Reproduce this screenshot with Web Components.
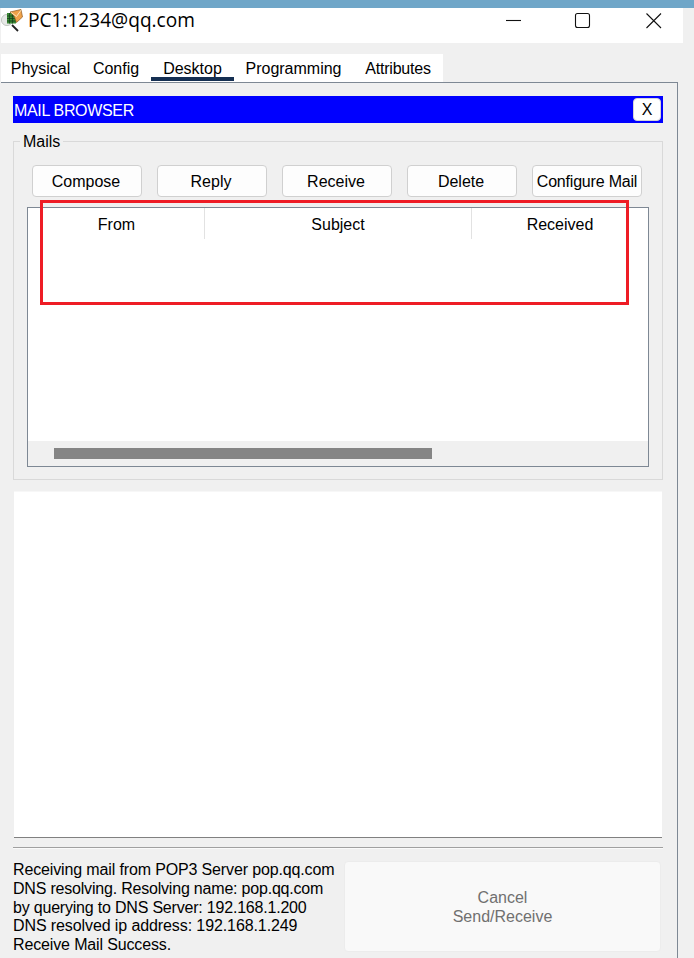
<!DOCTYPE html>
<html>
<head>
<meta charset="utf-8">
<title>PC1</title>
<style>
  html, body { margin: 0; padding: 0; background: #f0f0f0; }
  body { width: 694px; height: 958px; overflow: hidden; font-family: "Liberation Sans", Arial, sans-serif; font-size: 16px; color: #000; }
</style>
</head>
<body>
<pt-window>
  <span slot="title">PC1:1234@qq.com</span>
  <mail-browser></mail-browser>
</pt-window>

<script>
// helper so every element below just hands over its html
class ShadowBase extends HTMLElement {
  constructor() {
    super();
    this.attachShadow({ mode: 'open' });
  }
  connectedCallback() {
    this.shadowRoot.innerHTML = this.markup();
  }
}

class PtWindow extends ShadowBase {
  markup() {
    return `
      <style>
        :host { display: flex; flex-direction: column; height: 958px; }
        .strip { height: 8px; background: #6fa6c8; }
        .panel {
          flex: 1; min-height: 0; margin: 0 16px 0 1px; padding: 13px 0 0 12px;
          border-top: 1px solid #7e8894; border-right: 1px solid #7e8894;
        }
      </style>
      <div class="strip"></div>
      <title-bar><slot name="title"></slot></title-bar>
      <tab-bar></tab-bar>
      <div class="panel"><slot></slot></div>
    `;
  }
}

class TitleBar extends ShadowBase {
  markup() {
    return `
      <style>
        :host {
          display: flex; align-items: flex-start; height: 35px; width: 682px; margin: 0 0 11px 1px;
          background: #fff;
        }
        .icon { width: 22px; height: 24px; margin: 1px 0 0 0; flex: none; }
        .name { font: 19.1px/24px "Open Sans", "Noto Sans", sans-serif; color: #000; margin: 0 0 0 5px; flex: 1; }
        .ctl { flex: none; display: block; margin-right: 12px; }
      </style>
      <svg class="icon" viewBox="0 0 22 24">
        <circle cx="6" cy="11" r="5.6" fill="#e6e8e6" stroke="#c4c8c4" stroke-width="1"/>
        <path d="M11 16 L17 22" stroke="#222" stroke-width="1.8" fill="none"/>
        <rect x="6" y="4" width="9" height="10.5" fill="#3b8a35"/>
        <path d="M6 7h9M6 9.5h9M6 12h9M8.5 4v10.5M11.5 4v10.5" stroke="#15401a" stroke-width=".8" fill="none"/>
        <path d="M9 3 L20 .5 L21.5 8 L15.5 13.5 L13 7 Z" fill="#efa24a" stroke="#8e5a22" stroke-width=".7"/>
        <path d="M10 3.4 L15.5 7.5 L20 1.2" stroke="#fce6bd" stroke-width="1" fill="none"/>
      </svg>
      <div class="name"><slot></slot></div>
      <svg class="ctl" width="165" height="35" viewBox="0 0 165 35" fill="none" stroke="#111" stroke-width="1.1">
        <path d="M0 12.5 H15"/>
        <rect x="69.5" y="5.5" width="14" height="14" rx="2"/>
        <path d="M140.5 5.5 L155 20 M155 5.5 L140.5 20"/>
      </svg>
    `;
  }
}

class TabBar extends ShadowBase {
  markup() {
    const tabs = [['Physical', 79, 0, 0], ['Config', 71, 0, 1], ['Desktop', 83, 0, 0], ['Programming', 119, 0, 0], ['Attributes', 90, -0.2, 0]];
    return `
      <style>
        :host { display: flex; height: 28px; width: 442px; margin-left: 1px; background: #fff; }
        .tab { box-sizing: border-box; text-align: center; font-size: 16px; line-height: 18px; padding-top: 6px; color: #000; }
        .on { border-bottom: 4px solid #152f52; height: 27px; }
      </style>
      ${tabs.map(t => `<div class="tab ${t[0] === 'Desktop' ? 'on' : ''}" style="width:${t[1]}px;letter-spacing:${t[2]}px;padding-left:${t[3]}px">${t[0]}</div>`).join('')}
    `;
  }
}

class MailButton extends ShadowBase {
  markup() {
    return `
      <style>
        :host {
          display: flex; align-items: center; justify-content: center; box-sizing: border-box;
          width: 110px; height: 32px; padding: 2px 2px 0 0; background: #fdfdfd; border: 1px solid #d0d0d0; border-radius: 4px;
          font-size: 16px; white-space: nowrap;
        }
      </style>
      <slot></slot>
    `;
  }
}

class MailTable extends ShadowBase {
  markup() {
    return `
      <style>
        :host {
          display: flex; flex-direction: column; box-sizing: border-box; width: 622px; height: 260px; margin: 10px 0 0 13px;
          border: 1px solid #7e8894; background: #fff;
        }
        .head { display: grid; grid-template-columns: 176px 267px 1fr; height: 31px; }
        .head div { text-align: center; padding-top: 8px; line-height: 18px; font-size: 16px; box-sizing: border-box; }
        .head div:first-child { padding-left: 1px; }
        .head div + div { border-left: 1px solid #e2e2e2; }
        .rows { flex: 1; }
        .track { height: 25px; background: #f0f0f0; padding: 7px 0 0 26px; box-sizing: border-box; }
        .thumb { width: 378px; height: 11px; background: #858585; }
      </style>
      <div class="head"><div>From</div><div>Subject</div><div>Received</div></div>
      <div class="rows"></div>
      <div class="track"><div class="thumb"></div></div>
    `;
  }
}

class MailBrowser extends ShadowBase {
  markup() {
    const names = ['Compose', 'Reply', 'Receive', 'Delete', 'Configure Mail'];
    const log = [
      ['Receiving mail from POP3 Server pop.qq.com', -0.14],
      ['DNS resolving. Resolving name: pop.qq.com', -0.2],
      ['by querying to DNS Server: 192.168.1.200', -0.2],
      ['DNS resolved ip address: 192.168.1.249', -0.1],
      ['Receive Mail Success.', -0.14]
    ];
    return `
      <style>
        :host { display: block; width: 650px; position: relative; }
        .bar {
          display: flex; align-items: center; justify-content: space-between; height: 27px;
          background: #0000ff; color: #fff; padding: 0 2px 0 1px; font-size: 16px;
        }
        .bar span { padding-top: 2px; letter-spacing: -0.33px; }
        .x {
          box-sizing: border-box; width: 28px; height: 23px; background: #fff; color: #000; border: 1px solid #d5d5d5;
          border-radius: 4px; text-align: center; line-height: 22px; font-size: 16px;
        }
        .mails {
          box-sizing: border-box; height: 339px; margin-top: 18px; border: 1px solid #d9d9d9;
        }
        .legend {
          width: fit-content; height: 18px; line-height: 18px; margin: -10px 0 0 6px; padding: 1px 3px 0;
          background: #f0f0f0; font-size: 16px; box-sizing: border-box;
        }
        .btns { display: flex; gap: 15px; margin: 15px 0 0 18px; }
        .preview {
          box-sizing: border-box; height: 347px; margin: 11px 0 0 1px; background: #fff;
          border-top: 1px solid #f7f7f7; border-bottom: 1px solid #808080; width: 648px;
        }
        hr { height: 1px; margin: 9px 0 0; border: 0; background: #a0a0a0; box-shadow: 0 1px 0 #fafafa; }
        .foot { display: flex; justify-content: space-between; margin-top: 13px; }
        .log { font-size: 16px; line-height: 18.75px; white-space: nowrap; }
        .cancel {
          flex: none; box-sizing: border-box; width: 317px; height: 91px; margin-right: 2px; background: #f9f9f9; color: #707070;
          border: 1px solid #ececec; border-radius: 4px; display: flex; align-items: center; justify-content: center;
          text-align: center; font-size: 16px; line-height: 19px;
        }
        .mark {
          position: absolute; left: 27px; top: 104px; width: 589px; height: 105px; box-sizing: border-box;
          border: 3px solid #ee1c25; pointer-events: none;
        }
      </style>
      <div class="bar"><span>MAIL BROWSER</span><div class="x">X</div></div>
      <div class="mails">
        <div class="legend">Mails</div>
        <div class="btns">${names.map(n => `<mail-button${n === 'Configure Mail' ? ' style="letter-spacing:-.2px;padding-right:0"' : ''}>${n}</mail-button>`).join('')}</div>
        <mail-table></mail-table>
      </div>
      <div class="preview"></div>
      <hr>
      <div class="foot">
        <div class="log">${log.map(l => `<div style="letter-spacing:${l[1]}px">${l[0]}</div>`).join('')}</div>
        <div class="cancel">Cancel<br>Send/Receive</div>
      </div>
      <div class="mark"></div>
    `;
  }
}

customElements.define('pt-window', PtWindow);
customElements.define('title-bar', TitleBar);
customElements.define('tab-bar', TabBar);
customElements.define('mail-button', MailButton);
customElements.define('mail-table', MailTable);
customElements.define('mail-browser', MailBrowser);
</script>
</body>
</html>
